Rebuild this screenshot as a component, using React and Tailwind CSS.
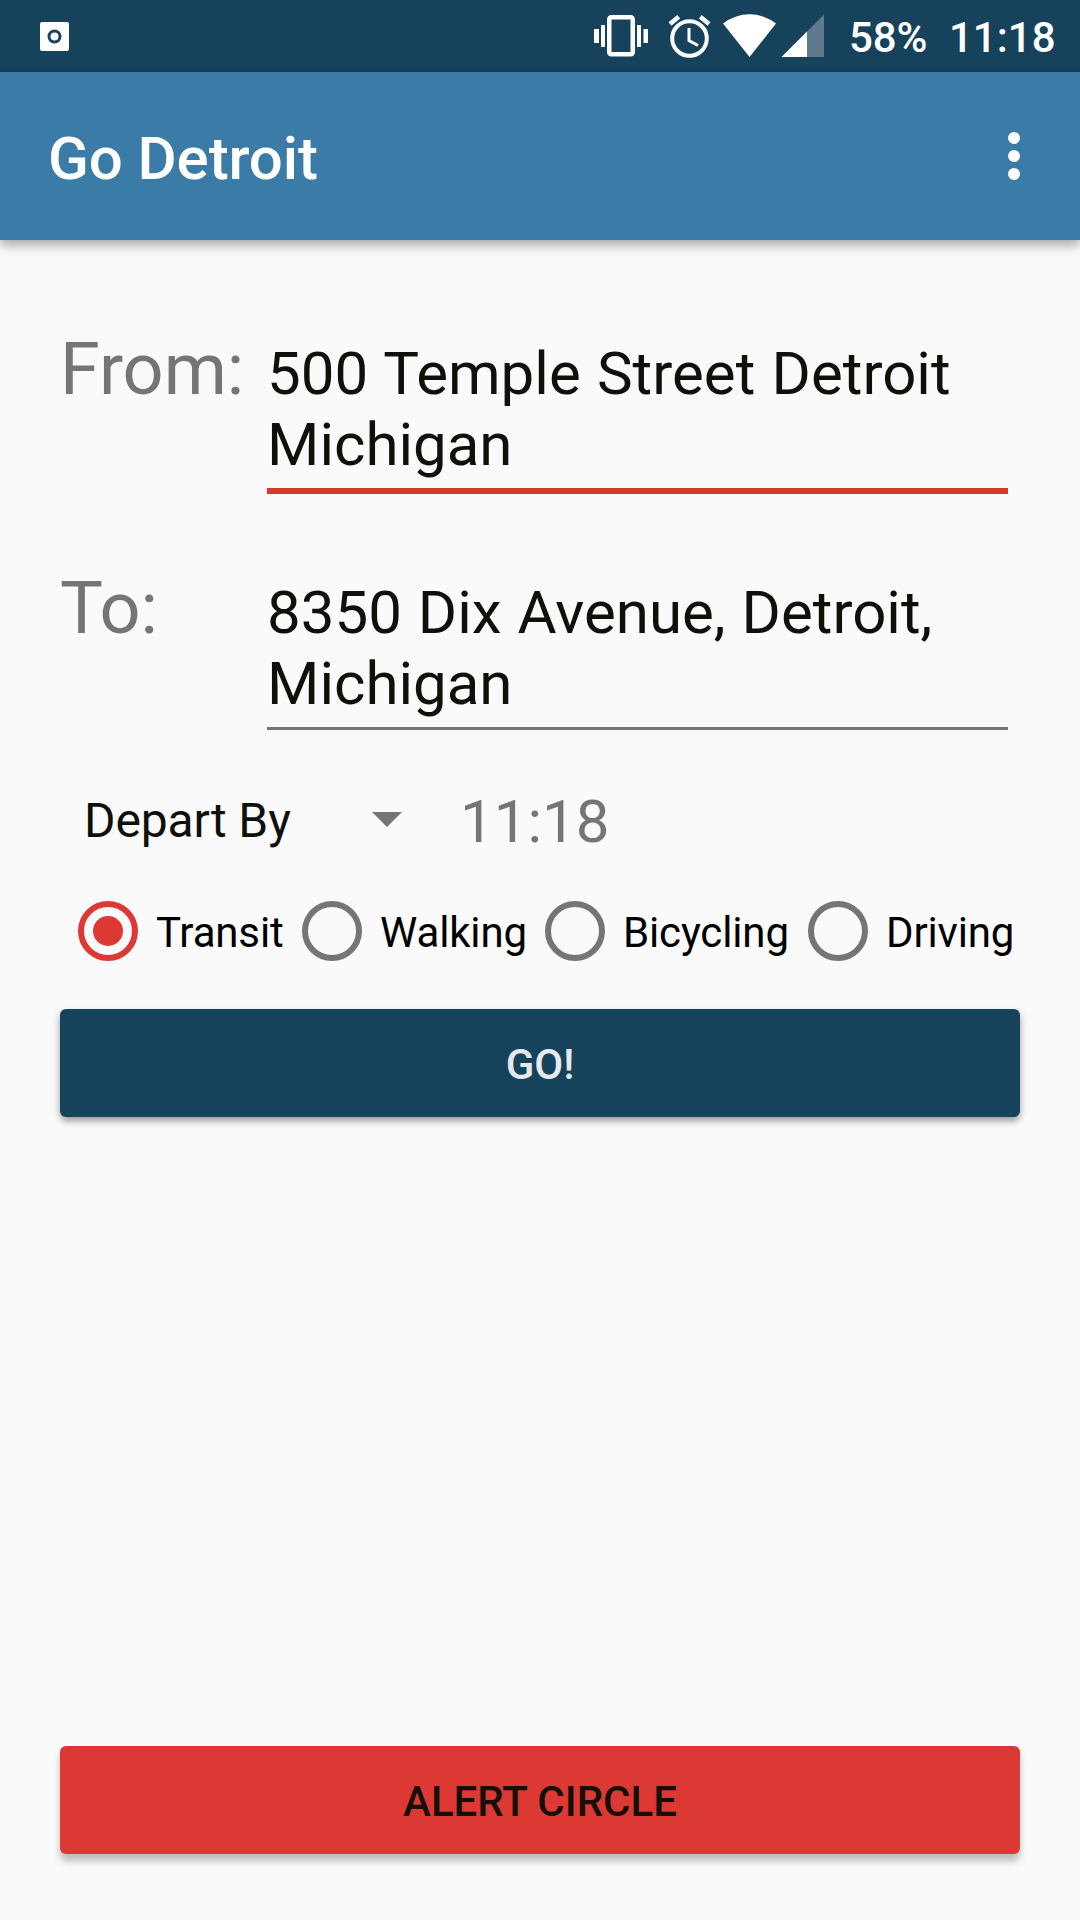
const Radio = ({ label, checked, className = "" }) => (
  <div className={`flex h-[96px] items-center ${className}`}>
    <div className={`flex size-[60px] shrink-0 items-center justify-center rounded-full border-[6px] ${checked ? "border-[#dc3935]" : "border-[#757575]"}`}>
      {checked && <div className="size-[30px] rounded-full bg-[#dc3935]" />}
    </div>
    <span className="ml-[18px] pt-[4px] text-[42px] leading-[50px] tracking-[-0.15px] whitespace-nowrap text-black">{label}</span>
  </div>
);

export default function App() {
  return (
    <div className="flex h-[1920px] w-[1080px] flex-col overflow-hidden bg-[#fafafa] font-['Roboto',sans-serif]">
      <div className="flex h-[72px] shrink-0 items-center bg-[#17425b] pr-[24px] pl-[40px] text-white">
        <svg className="size-[29px]" viewBox="0 0 29 29">
          <rect width="29" height="29" rx="2" fill="#fff" />
          <circle cx="14.500" cy="14.500" r="5.500" fill="none" stroke="#17425b" strokeWidth="3" />
        </svg>
        <svg className="ml-auto h-[72px] w-[240px] shrink-0" viewBox="590 0 240 72" fill="#fff">
          <path d="M594 29h5v14h-5zM601 25h4v22h-4zM637 25h4v22h-4zM643.500 29h4.500v14h-4.500z" />
          <rect x="609.250" y="17.250" width="23.500" height="37" rx="2" fill="none" stroke="#fff" strokeWidth="4.500" />
          <circle cx="689.500" cy="38.500" r="17.300" fill="none" stroke="#fff" strokeWidth="4" />
          <path d="M670 24l8.700-7.300M709 24l-8.700-7.300" fill="none" stroke="#fff" strokeWidth="4.500" />
          <path d="M689 28v12.500l9 5" fill="none" stroke="#fff" strokeWidth="3" />
          <path d="M749.500 57L723 23.500a43 43 0 0 1 53 0z" />
          <path d="M824 14.500V57h-42.500z" opacity=".3" />
          <path d="M807 31.500V57h-25.500z" />
        </svg>
        <span className="ml-[19px] w-[100px] pt-[4px] text-[42px] leading-[50px] font-medium tracking-[-0.1px] whitespace-nowrap">58%</span>
        <span className="w-[107px] pt-[4px] text-[42px] leading-[50px] font-medium whitespace-nowrap">11:18</span>
      </div>
      <header className="z-10 flex h-[168px] shrink-0 items-center justify-between bg-[#3b7ba8] pr-[60px] pl-[48px] shadow-[0_5px_11px_rgba(0,0,0,0.34)]">
        <h1 className="pt-[6px] text-[60px] leading-[70px] font-medium tracking-[-0.1px] text-white">Go Detroit</h1>
        <div className="flex flex-col gap-[6px]">
          <i className="size-3 rounded-full bg-white" />
          <i className="size-3 rounded-full bg-white" />
          <i className="size-3 rounded-full bg-white" />
        </div>
      </header>
      <main className="flex grow flex-col px-[60px] pb-[66px]">
        <div className="mt-[87px] flex h-[167px]">
          <div className="w-[207px] pt-px text-[72px] leading-[84px] text-[#757575]">From:</div>
          <div className="w-[741px] border-b-[6px] border-[#d63a2f] pt-[11px] text-[60px] leading-[71px] [word-spacing:1.4px] whitespace-nowrap text-[#10100a]">500 Temple Street Detroit<br />Michigan</div>
        </div>
        <div className="mt-[72px] flex h-[164px]">
          <div className="w-[207px] pt-px text-[72px] leading-[84px] text-[#757575]">To:</div>
          <div className="w-[741px] border-b-[3px] border-[#757575] pt-[11px] text-[60px] leading-[71px] [word-spacing:1.1px] whitespace-nowrap text-[#10100a]">8350 Dix Avenue, Detroit,<br />Michigan</div>
        </div>
        <div className="mt-[50px] flex h-[82px] items-center">
          <span className="ml-6 w-[288px] text-[48px] tracking-[-0.1px] text-[#10100a]">Depart By</span>
          <svg className="mb-[3px] h-[15px] w-[30px]" viewBox="0 0 30 15" fill="#757575"><path d="M0 0h30L15 15z" /></svg>
          <span className="ml-[58px] pt-px text-[60px] text-[#757575]">11:18</span>
        </div>
        <div className="mt-[21px] flex h-[96px] pl-[18px]">
          <Radio label="Transit" checked className="w-[224px]" />
          <Radio label="Walking" className="w-[243px]" />
          <Radio label="Bicycling" className="w-[263px]" />
          <Radio label="Driving" />
        </div>
        <button className="mt-[30px] h-[108px] rounded-[6px] bg-[#17425b] pt-[2px] text-[42px] font-medium text-[#e4eaee] shadow-[0_4px_7px_rgba(0,0,0,0.38)]">GO!</button>
        <button className="mt-auto h-[108px] rounded-[6px] bg-[#dc3935] pt-[2px] text-[42px] font-medium text-[#151003] shadow-[0_7px_7px_rgba(0,0,0,0.25)]">ALERT CIRCLE</button>
      </main>
    </div>
  );
}
